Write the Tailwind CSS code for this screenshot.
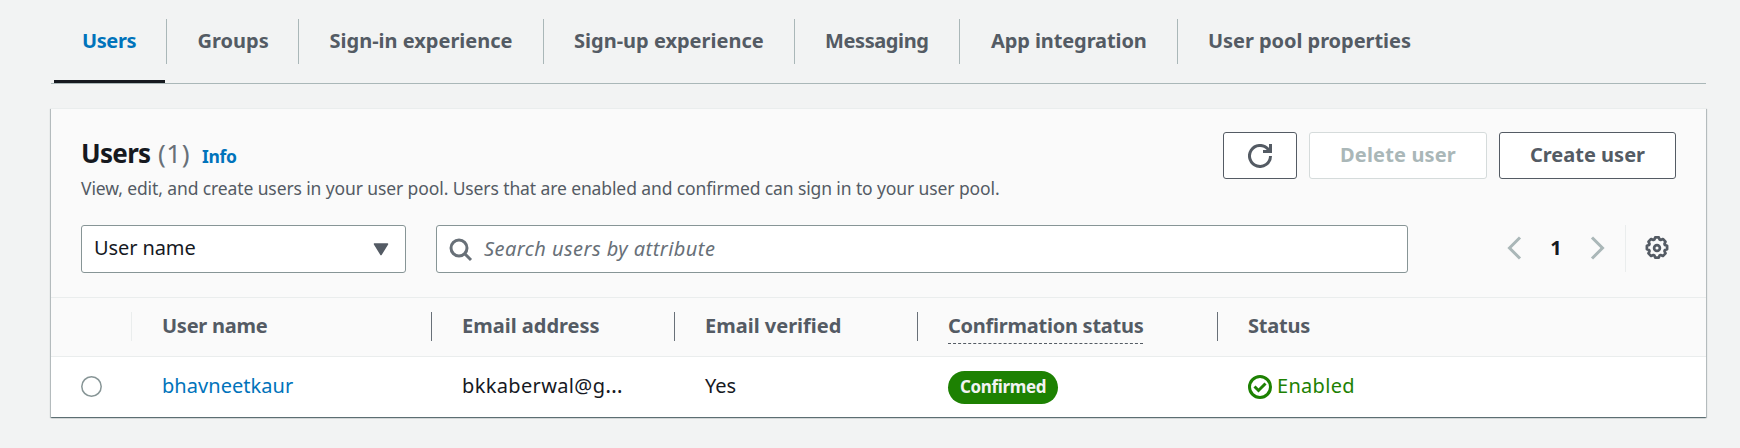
<!DOCTYPE html>
<html lang="en">
<head>
<meta charset="utf-8">
<title>User pool</title>
<script src="https://cdn.jsdelivr.net/npm/@tailwindcss/browser@4"></script>
</head>
<body class="h-[448px] overflow-hidden bg-[#f2f3f3] pl-[51px] pr-[34px] font-['Noto_Sans','Open_Sans',sans-serif] text-[20px] text-[#16191f]">

<!-- Tabs -->
<nav class="flex h-[84px] border-b border-[#aab7b8] pl-[3px] pt-[19px] text-[20px] font-bold leading-[43px] whitespace-nowrap text-[#545b64]">
  <div class="w-[113px] h-[64px] shrink-0">
    <a class="flex h-[45px] w-[113px] border-r border-[#aab7b8] pl-[28px] tracking-[-0.4px] text-[#0073bb]">Users</a>
    <div class="mt-[16px] h-[3px] w-[111px] bg-[#16191f]"></div>
  </div>
  <a class="h-[45px] w-[132px] border-r border-[#aab7b8] pl-[30.5px]">Groups</a>
  <a class="h-[45px] w-[245px] border-r border-[#aab7b8] pl-[30.5px]">Sign-in experience</a>
  <a class="h-[45px] w-[251px] border-r border-[#aab7b8] pl-[30px]">Sign-up experience</a>
  <a class="h-[45px] w-[165px] border-r border-[#aab7b8] pl-[30px] tracking-[-0.4px]">Messaging</a>
  <a class="h-[45px] w-[218px] border-r border-[#aab7b8] pl-[31px] tracking-[-0.1px]">App integration</a>
  <a class="h-[45px] pl-[30px] tracking-[-0.05px]">User pool properties</a>
</nav>

<!-- Users panel -->
<main class="mt-[24px] h-[309px] border-t border-[#eaeded] bg-[#fafafa] shadow-[0_1px_1px_0_rgba(0,28,36,0.4),1px_1px_1px_0_rgba(0,28,36,0.2),-1px_1px_1px_0_rgba(0,28,36,0.2)]">
  <header class="flex h-[116px] justify-between pl-[29px] pr-[30px]">
    <div class="pt-[24px]">
      <div class="flex h-[40px] items-baseline pl-px leading-[40px] whitespace-nowrap">
        <h2 class="w-[77px] text-[26px] font-bold tracking-[-0.7px]">Users</h2>
        <span class="w-[44px] text-[26px] tracking-[0.5px] text-[#687078]">(1)</span>
        <a class="text-[17.5px] font-bold tracking-[-0.3px] text-[#0073bb]">Info</a>
      </div>
      <p class="mt-[3px] h-[24px] pl-px text-[17.5px] leading-[24px] tracking-[-0.11px] whitespace-nowrap text-[#545b64]">View, edit, and create users in your user pool. Users that are enabled and confirmed can sign in to your user pool.</p>
    </div>
    <div class="flex gap-[12px] pt-[22px] font-bold leading-[43px] text-[#545b64]">
      <button class="mt-px flex h-[47px] w-[74px] items-center justify-center rounded-[3px] border border-[#545b64] bg-white">
        <svg class="size-[24px]" viewBox="0 0 16 16" fill="none" stroke="currentColor" stroke-width="2"><path d="M15 8a7 7 0 1 1-1.700-4.600L15 5"/><path d="M10 5h5V0"/></svg>
      </button>
      <button class="mt-px h-[47px] w-[178px] rounded-[3px] border border-[#d5dbdb] bg-white pb-[2px] tracking-[0.15px] text-[#aab7b8]">Delete user</button>
      <button class="mt-px h-[47px] w-[177px] rounded-[3px] border border-[#545b64] bg-white pb-[2px]">Create user</button>
    </div>
  </header>

  <div class="flex h-[72px] pl-[30px]">
    <div class="flex h-[48px] w-[325px] justify-between rounded-[3px] border border-[#879596] bg-white pl-[12px] pr-[16px] leading-[43px]">
      <span class="tracking-[-0.1px]">User name</span>
      <svg class="mt-[17px] h-[13px] w-[16px] text-[#545b64]" viewBox="0 0 16 13"><path d="M1.500 1h13L8 11.500z" fill="currentColor" stroke="currentColor" stroke-width="1.500" stroke-linejoin="round"/></svg>
    </div>
    <div class="ml-[30px] flex h-[48px] w-[972px] rounded-[3px] border border-[#879596] bg-white pl-[12px] leading-[45px] text-[#687078]">
      <svg class="mt-[12px] mr-[11px] size-[24px]" viewBox="0 0 24 24" fill="none" stroke="currentColor" stroke-width="3"><circle cx="10" cy="10" r="8"/><path d="M15.500 15.500l6.500 6.500"/></svg>
      <span class="tracking-[0.45px] italic">Search users by attribute</span>
    </div>
    <div class="ml-[98px] flex h-[48px] text-[#aab7b8]">
      <svg class="mt-[11px] h-[24px] w-[16px]" viewBox="0 0 16 24" fill="none" stroke="currentColor" stroke-width="3"><path d="M14 1.500L3.500 12 14 22.500"/></svg>
      <span class="w-[68px] text-center font-bold leading-[46px] text-[#16191f]">1</span>
      <svg class="mt-[11px] h-[24px] w-[16px]" viewBox="0 0 16 24" fill="none" stroke="currentColor" stroke-width="3"><path d="M2 1.500L12.500 12 2 22.500"/></svg>
      <div class="ml-[19px] h-[47px] w-px bg-[#eaeded]"></div>
      <svg class="mt-[11px] ml-[19px] size-[24px] text-[#545b64]" viewBox="0 0 24 24" fill="none" stroke="currentColor" stroke-width="2.700"><path stroke-linejoin="round" d="M10.200 1.400h3.600l.8 2.200 1 .400 2.300-1 2.600 2.600-1 2.300.400 1 2.200.800v3.600l-2.200.800-.400 1 1 2.300-2.600 2.600-2.300-1-1 .400-.800 2.200h-3.600l-.800-2.200-1-.400-2.300 1-2.600-2.600 1-2.300-.400-1-2.200-.800v-3.600l2.200-.800.400-1-1-2.300 2.600-2.600 2.300 1 1-.400z"/><circle cx="12" cy="12" r="2.900"/></svg>
    </div>
  </div>

  <!-- Table header -->
  <div class="flex h-[60px] border-y border-[#eaeded] pt-[14px] font-bold leading-[28px] whitespace-nowrap text-[#545b64]">
    <div class="h-[29px] w-[81px] border-r border-[#eaeded]"></div>
    <div class="h-[29px] w-[300px] border-r border-[#687078] pl-[30px] tracking-[-0.25px]">User name</div>
    <div class="h-[29px] w-[243px] border-r border-[#687078] pl-[30px]">Email address</div>
    <div class="h-[29px] w-[243px] border-r border-[#687078] pl-[30px]">Email verified</div>
    <div class="h-[29px] w-[300px] border-r border-[#687078] pl-[30px]"><span class="block h-[32px] w-[195px] border-b border-dashed border-[#545b64] tracking-[-0.250px]">Confirmation status</span></div>
    <div class="pl-[30px] tracking-[-0.2px]">Status</div>
  </div>

  <!-- Table row -->
  <div class="flex h-[60px] bg-white leading-[58px] whitespace-nowrap">
    <div class="w-[81px] pt-[19px] pl-[30px]"><svg class="size-[21px] text-[#879596]" viewBox="0 0 21 21" fill="none" stroke="currentColor" stroke-width="1.500"><circle cx="10.500" cy="10.500" r="9.700"/></svg></div>
    <a class="w-[300px] pl-[30px] tracking-[0.05px] text-[#0073bb]">bhavneetkaur</a>
    <div class="w-[243px] pl-[30px] tracking-[0.35px]">bkkaberwal@g<span class="text-[22px] leading-none">…</span></div>
    <div class="w-[243px] pl-[30px]">Yes</div>
    <div class="w-[300px] pt-[14px] pl-[30px]"><span class="block h-[33px] w-[110px] rounded-full bg-[#1d8102] text-center text-[17px] font-bold leading-[31px] tracking-[-0.35px] text-[#f2f3f3]">Confirmed</span></div>
    <div class="flex pl-[30px] tracking-[0.3px] text-[#1d8102]">
      <svg class="mt-[18px] mr-[5px] size-[24px]" viewBox="0 0 24 24" fill="none" stroke="currentColor" stroke-width="3"><circle cx="12" cy="12" r="10.500"/><path d="M6.500 11.500l4 4 7-7"/></svg>
      <span>Enabled</span>
    </div>
  </div>
</main>
</body>
</html>
